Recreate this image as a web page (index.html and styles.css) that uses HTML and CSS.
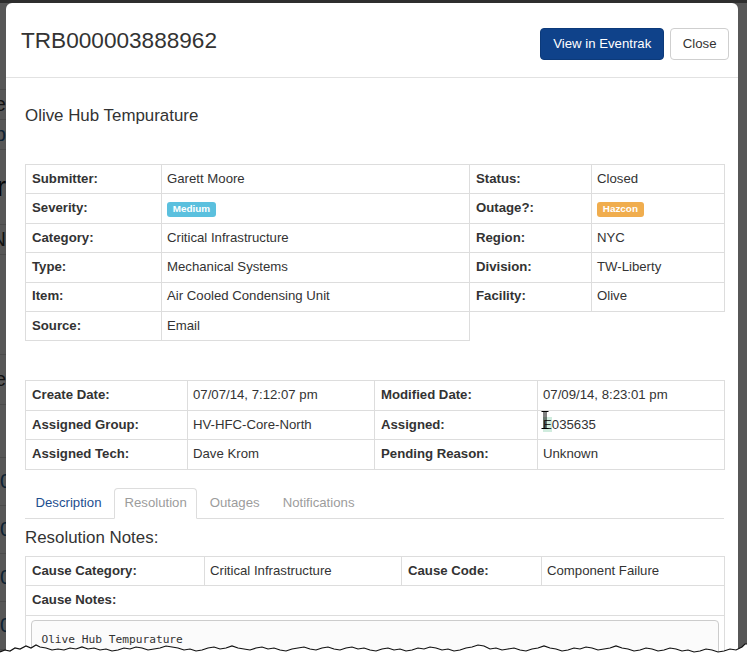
FILE: index.html
```html
<!DOCTYPE html>
<html lang="en">
<head>
<meta charset="utf-8">
<title>TRB000003888962</title>
<link rel="stylesheet" href="styles.css">
</head>
<body>
<div class="ghost">
  <div class="g-row g-h90"></div>
  <div class="g-row g-h30 g-txt">Name</div>
  <div class="g-row g-h30 g-link">Group</div>
  <div class="g-row g-h75 g-big">Ter</div>
  <div class="g-row g-h30 g-txt">ON</div>
  <div class="g-row g-h100"></div>
  <div class="g-row g-h50 g-txt">Type</div>
  <div class="g-row g-h53"></div>
  <div class="g-row g-h48 g-link g-left">0</div>
  <div class="g-row g-h48 g-link g-left">0</div>
  <div class="g-row g-h48 g-link g-left">0</div>
  <div class="g-row g-h48 g-link g-left">0</div>
</div>
<div class="backdrop"></div>
<div class="modal">
  <div class="modal-header">
    <h4 class="modal-title">TRB000003888962</h4>
    <div class="header-actions">
      <button class="btn btn-primary" type="button">View in Eventrak</button>
      <button class="btn btn-default" type="button">Close</button>
    </div>
  </div>
  <div class="modal-body">
    <h4 class="subtitle">Olive Hub Tempurature</h4>

    <table class="tbl tbl-main">
      <colgroup><col class="c136"><col class="c308"><col class="c122"><col class="c133"></colgroup>
      <tr><th>Submitter:</th><td>Garett Moore</td><th>Status:</th><td>Closed</td></tr>
      <tr><th>Severity:</th><td><span class="label label-info">Medium</span></td><th>Outage?:</th><td><span class="label label-warning">Hazcon</span></td></tr>
      <tr><th>Category:</th><td>Critical Infrastructure</td><th>Region:</th><td>NYC</td></tr>
      <tr><th>Type:</th><td>Mechanical Systems</td><th>Division:</th><td>TW-Liberty</td></tr>
      <tr><th>Item:</th><td>Air Cooled Condensing Unit</td><th>Facility:</th><td>Olive</td></tr>
      <tr><th>Source:</th><td>Email</td></tr>
    </table>

    <table class="tbl tbl-dates">
      <colgroup><col class="c162"><col class="c187"><col class="c163"><col class="c187"></colgroup>
      <tr><th>Create Date:</th><td>07/07/14, 7:12:07 pm</td><th>Modified Date:</th><td>07/09/14, 8:23:01 pm</td></tr>
      <tr><th>Assigned Group:</th><td>HV-HFC-Core-North</td><th>Assigned:</th><td class="assigned-cell"><span class="sel">E</span>035635</td></tr>
      <tr><th>Assigned Tech:</th><td>Dave Krom</td><th>Pending Reason:</th><td>Unknown</td></tr>
    </table>

    <ul class="nav-tabs">
      <li><a class="tab tab-link">Description</a></li>
      <li><a class="tab tab-active">Resolution</a></li>
      <li><a class="tab tab-muted">Outages</a></li>
      <li><a class="tab tab-muted">Notifications</a></li>
    </ul>

    <h4 class="section-title">Resolution Notes:</h4>

    <table class="tbl tbl-res">
      <colgroup><col class="c179"><col class="c197"><col class="c140"><col class="c183"></colgroup>
      <tr><th>Cause Category:</th><td>Critical Infrastructure</td><th>Cause Code:</th><td>Component Failure</td></tr>
      <tr><th colspan="4">Cause Notes:</th></tr>
      <tr><td colspan="4" class="pre-cell"><pre class="notes">Olive Hub Tempurature</pre></td></tr>
    </table>
  </div>
</div>
<svg class="ibeam" width="8" height="18" viewBox="0 0 8 18" aria-hidden="true">
  <path d="M0.5 0.5h2.5v17h-2.5M7.5 0.5h-2.5v17h2.5M3 0.5h2M3 17.5h2" fill="none" stroke="#000" stroke-width="1"/>
</svg>
<svg class="torn" width="747" height="16" viewBox="0 640 747 16" aria-hidden="true">
  <polygon fill="#fff" points="0,652 5,650 10,651 15,648 20,649 26,646 31,648 36,645 40,647 46,648 52,650 58,649 64,650 70,648 76,649 82,647 88,649 94,648 100,650 106,649 112,651 118,650 124,648 130,649 136,647 142,648 148,650 154,649 160,648 166,646 172,647 178,648 184,650 190,649 196,651 202,650 208,648 214,647 220,649 226,648 232,646 238,648 244,649 250,650 256,648 262,647 268,649 274,648 280,650 286,651 292,649 298,648 304,647 310,649 316,650 322,648 328,647 334,649 340,650 346,648 352,647 358,649 364,648 370,650 376,651 382,649 388,648 394,650 400,649 406,651 412,650 418,648 424,649 430,647 436,648 442,650 448,649 454,651 460,650 466,648 472,647 478,645 484,646 490,649 496,648 502,650 508,649 514,648 520,650 526,651 532,649 538,648 544,646 550,648 556,649 562,651 568,650 574,648 580,649 586,647 592,648 598,650 604,649 610,648 616,646 622,648 628,649 634,651 640,650 646,648 652,649 658,651 664,650 670,648 676,649 682,651 688,650 694,652 700,651 706,649 712,650 718,652 724,651 730,649 736,650 742,647 745,644 747,644 747,656 0,656"/>
  <polyline fill="none" stroke="#111" stroke-width="1.2" points="0,652 5,650 10,651 15,648 20,649 26,646 31,648 36,645 40,647 46,648 52,650 58,649 64,650 70,648 76,649 82,647 88,649 94,648 100,650 106,649 112,651 118,650 124,648 130,649 136,647 142,648 148,650 154,649 160,648 166,646 172,647 178,648 184,650 190,649 196,651 202,650 208,648 214,647 220,649 226,648 232,646 238,648 244,649 250,650 256,648 262,647 268,649 274,648 280,650 286,651 292,649 298,648 304,647 310,649 316,650 322,648 328,647 334,649 340,650 346,648 352,647 358,649 364,648 370,650 376,651 382,649 388,648 394,650 400,649 406,651 412,650 418,648 424,649 430,647 436,648 442,650 448,649 454,651 460,650 466,648 472,647 478,645 484,646 490,649 496,648 502,650 508,649 514,648 520,650 526,651 532,649 538,648 544,646 550,648 556,649 562,651 568,650 574,648 580,649 586,647 592,648 598,650 604,649 610,648 616,646 622,648 628,649 634,651 640,650 646,648 652,649 658,651 664,650 670,648 676,649 682,651 688,650 694,652 700,651 706,649 712,650 718,652 724,651 730,649 736,650 742,647 745,644 747,644"/>
</svg>
</body>
</html>
```

FILE: styles.css
```css
html, body {
  margin: 0;
  padding: 0;
  height: 100%;
  overflow: hidden;
}

body {
  position: relative;
  background: #fff;
  font-family: "Liberation Sans", Arial, sans-serif;
  color: #333;
  font-size: 13.2px;
}

/* page content underneath the modal (only a sliver shows) */
.ghost {
  width: 6px;
  overflow: hidden;
  display: flex;
  flex-direction: column;
  font-size: 20px;
}
.g-row {
  display: flex;
  justify-content: flex-end;
  align-items: center;
  white-space: nowrap;
  border-bottom: 1px solid #ddd;
  box-sizing: border-box;
  color: #333;
  flex: none;
}
.g-left { justify-content: flex-start; }
.g-h90 { height: 90px; }
.g-h30 { height: 30px; }
.g-h75 { height: 75px; font-size: 28px; }
.g-h100 { height: 100px; }
.g-h50 { height: 50px; }
.g-h53 { height: 53px; }
.g-h48 { height: 48px; }
.g-link { color: #2a6496; }
.g-big { color: #111; }

.backdrop {
  position: absolute;
  inset: 0;
  background: rgba(0, 0, 0, 0.66);
  border-top: 3px solid #2e2e2e;
}

.modal {
  position: absolute;
  left: 6px;
  top: 3px;
  width: 732px;
  height: 720px;
  background: #fff;
  border-radius: 6px 6px 0 0;
}

.modal-header {
  box-sizing: border-box;
  height: 75px;
  padding: 25px 9px 0 15px;
  border-bottom: 1px solid #e2e2e2;
  display: flex;
  justify-content: space-between;
  align-items: flex-start;
}

.modal-title {
  margin: 0;
  font-size: 22.6px;
  line-height: 25px;
  font-weight: normal;
  color: #333;
}

.header-actions {
  display: flex;
  gap: 6px;
}

.btn {
  box-sizing: border-box;
  height: 32px;
  padding: 0 12px;
  border: 1px solid transparent;
  border-radius: 4px;
  font-family: "Liberation Sans", Arial, sans-serif;
  font-size: 13.2px;
  line-height: 30px;
  cursor: pointer;
}
.btn-primary {
  background: #0f428a;
  border-color: #0c3a7a;
  color: #fff;
}
.btn-default {
  background: #fff;
  border-color: #cfcfcf;
  color: #333;
  padding: 0 11.5px;
}

.modal-body {
  padding: 0 14px 0 19px;
}

.subtitle {
  margin: 28px 0 0;
  font-size: 16.9px;
  line-height: 19px;
  font-weight: normal;
  color: #333;
}

.tbl {
  width: 699px;
  border-collapse: collapse;
  table-layout: fixed;
}
.tbl th,
.tbl td {
  border: 1px solid #ddd;
  padding: 4.8px 5px 4.8px;
  line-height: 18.8px;
  font-size: 13.2px;
  text-align: left;
  vertical-align: top;
  white-space: nowrap;
  color: #333;
}
.tbl th { font-weight: bold; padding-left: 6px; }

.tbl-main { margin-top: 39px; }
.tbl-dates { margin-top: 39px; }
.tbl-res { margin-top: 9px; }

.c136 { width: 136px; }
.c308 { width: 308px; }
.c122 { width: 122px; }
.c133 { width: 133px; }
.c162 { width: 162px; }
.c187 { width: 187px; }
.c163 { width: 163px; }
.c179 { width: 179px; }
.c197 { width: 197px; }
.c140 { width: 140px; }
.c183 { width: 183px; }

.label {
  display: inline-block;
  padding: 2.2px 5.8px 2.9px;
  font-size: 9.9px;
  font-weight: bold;
  line-height: 1;
  color: #fff;
  border-radius: 3px;
  vertical-align: baseline;
}
.label-info { background: #5bc0de; }
.label-warning { background: #f0ad4e; }

.sel {
  background: rgba(120, 200, 160, 0.35);
}

.nav-tabs {
  list-style: none;
  margin: 18.5px 0 0;
  padding: 0;
  display: flex;
  border-bottom: 1px solid #ddd;
}
.nav-tabs li {
  margin-right: 2px;
  margin-bottom: -1px;
}
.tab {
  display: block;
  padding: 5px 9.5px;
  border: 1px solid transparent;
  border-radius: 4px 4px 0 0;
  line-height: 18.8px;
  font-size: 13.2px;
}
.tab-link { color: #1d4e8f; }
.tab-muted { color: #9c9c9c; }
.tab-active {
  color: #9c9c9c;
  background: #fff;
  border-color: #ddd #ddd transparent;
}

.section-title {
  margin: 9px 0 0;
  font-size: 16.9px;
  line-height: 19px;
  font-weight: normal;
  color: #333;
}

.pre-cell { padding-top: 5.5px; }

.notes {
  margin: 0;
  padding: 9.4px;
  border: 1px solid #ccc;
  border-radius: 4px;
  background: #fbfbfb;
  font-family: "DejaVu Sans Mono", "Liberation Mono", monospace;
  font-size: 11.2px;
  line-height: 17.6px;
  color: #333;
}

.ibeam {
  position: absolute;
  left: 541px;
  top: 411px;
}

.torn {
  position: absolute;
  left: 0;
  bottom: 0;
}
```
